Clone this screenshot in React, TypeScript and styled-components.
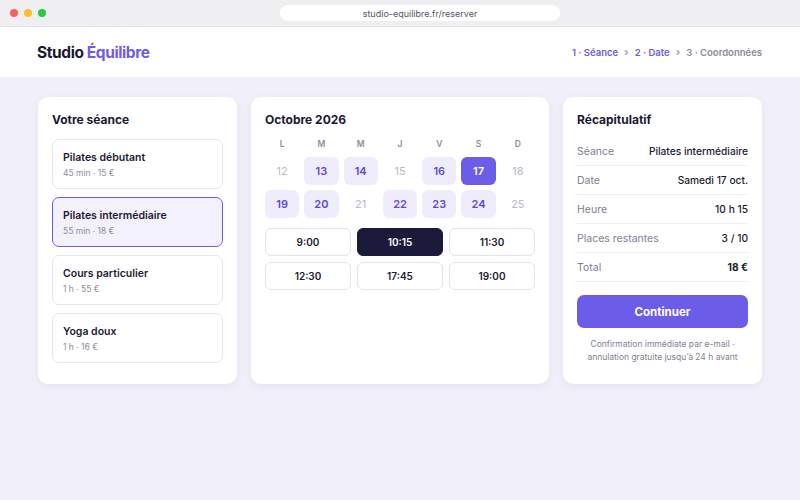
import React from 'react'
import styled, { createGlobalStyle } from 'styled-components'

const GlobalStyle = createGlobalStyle`
  * { box-sizing: border-box; }
  html, body { margin: 0; padding: 0; }
  body {
    font-family: Inter, "Noto Sans", sans-serif;
    background: #f1f0fa;
    color: #1c1a33;
    width: 800px;
    height: 500px;
    overflow: hidden;
  }
`

const sessions = [
  { name: 'Pilates débutant', meta: '45 min · 15 €' },
  { name: 'Pilates intermédiaire', meta: '55 min · 18 €', active: true },
  { name: 'Cours particulier', meta: '1 h · 55 €' },
  { name: 'Yoga doux', meta: '1 h · 16 €' },
]

const weekdays = ['L', 'M', 'M', 'J', 'V', 'S', 'D']

type DayState = 'off' | 'open' | 'selected'
const days: { n: number; state: DayState }[] = [
  { n: 12, state: 'off' },
  { n: 13, state: 'open' },
  { n: 14, state: 'open' },
  { n: 15, state: 'off' },
  { n: 16, state: 'open' },
  { n: 17, state: 'selected' },
  { n: 18, state: 'off' },
  { n: 19, state: 'open' },
  { n: 20, state: 'open' },
  { n: 21, state: 'off' },
  { n: 22, state: 'open' },
  { n: 23, state: 'open' },
  { n: 24, state: 'open' },
  { n: 25, state: 'off' },
]

const times = ['9:00', '10:15', '11:30', '12:30', '17:45', '19:00']

const recap = [
  { label: 'Séance', value: 'Pilates intermédiaire' },
  { label: 'Date', value: 'Samedi 17 oct.' },
  { label: 'Heure', value: '10 h 15' },
  { label: 'Places restantes', value: '3 / 10' },
  { label: 'Total', value: '18 €', strong: true },
]

const App: React.FC = () => {
  return (
    <>
      <GlobalStyle />
      <Chrome>
        <Dots>
          <Dot color='#fe5f57' />
          <Dot color='#febc2e' />
          <Dot color='#28c840' />
        </Dots>
        <UrlBar>studio-equilibre.fr/reserver</UrlBar>
      </Chrome>

      <Header>
        <Logo>
          Studio <span>Équilibre</span>
        </Logo>
        <Steps>
          <Step done>1 · Séance</Step>
          <Chevron>›</Chevron>
          <Step done>2 · Date</Step>
          <Chevron>›</Chevron>
          <Step>3 · Coordonnées</Step>
        </Steps>
      </Header>

      <Main>
        <Card>
          <CardTitle>Votre séance</CardTitle>
          <SessionList>
            {sessions.map((s) => (
              <SessionItem key={s.name} active={s.active}>
                <SessionName>{s.name}</SessionName>
                <SessionMeta>{s.meta}</SessionMeta>
              </SessionItem>
            ))}
          </SessionList>
        </Card>

        <Card>
          <CardTitle>Octobre 2026</CardTitle>
          <CalendarGrid>
            {weekdays.map((d, i) => (
              <Weekday key={i}>{d}</Weekday>
            ))}
            {days.map((d) => (
              <DayCell key={d.n} state={d.state}>
                {d.n}
              </DayCell>
            ))}
          </CalendarGrid>
          <TimeGrid>
            {times.map((t) => (
              <TimeSlot key={t} active={t === '10:15'}>
                {t}
              </TimeSlot>
            ))}
          </TimeGrid>
        </Card>

        <Card>
          <CardTitle>Récapitulatif</CardTitle>
          <RecapList>
            {recap.map((r) => (
              <RecapRow key={r.label}>
                <RecapLabel>{r.label}</RecapLabel>
                <RecapValue strong={r.strong}>{r.value}</RecapValue>
              </RecapRow>
            ))}
          </RecapList>
          <ContinueButton>Continuer</ContinueButton>
          <Note>
            Confirmation immédiate par e-mail ·
            <br />
            annulation gratuite jusqu’à 24 h avant
          </Note>
        </Card>
      </Main>
    </>
  )
}

const Chrome = styled.div`
  height: 27px;
  background: #efeff1;
  border-bottom: 1px solid #e2e2e6;
  display: flex;
  align-items: center;
  padding-left: 280px;
  position: relative;
`

const Dots = styled.div`
  position: absolute;
  left: 10px;
  top: 9px;
  display: flex;
  gap: 6px;
`

const Dot = styled.span<{ color: string }>`
  width: 8px;
  height: 8px;
  border-radius: 50%;
  background: ${(p) => p.color};
`

const UrlBar = styled.div`
  width: 280px;
  height: 16px;
  border-radius: 8px;
  background: #ffffff;
  font-size: 9px;
  color: #55555f;
  display: flex;
  align-items: center;
  justify-content: center;
`

const Header = styled.header`
  height: 50px;
  background: #ffffff;
  display: flex;
  align-items: center;
  justify-content: space-between;
  padding: 0 38px 0 37px;
`

const Logo = styled.div`
  font-size: 15.5px;
  font-weight: 700;
  letter-spacing: -0.4px;
  color: #1a1830;
  span {
    color: #6c5ce7;
  }
`

const Steps = styled.nav`
  display: flex;
  align-items: center;
  gap: 6px;
  font-size: 9.5px;
  font-weight: 600;
`

const Step = styled.span<{ done?: boolean }>`
  color: ${(p) => (p.done ? '#6c5ce7' : '#8b8a9c')};
`

const Chevron = styled.span`
  color: #9a99aa;
  font-size: 11px;
`

const Main = styled.main`
  display: grid;
  grid-template-columns: 199px 298px 199px;
  gap: 14px;
  padding: 20px 38px;
`

const Card = styled.section`
  background: #ffffff;
  border-radius: 10px;
  box-shadow: 0 2px 8px rgba(40, 30, 110, 0.07);
  padding: 15px 14px 20px;
  height: 287px;
  display: flex;
  flex-direction: column;
`

const CardTitle = styled.h2`
  margin: 0 0 12px;
  font-size: 12px;
  font-weight: 700;
  color: #1a1830;
  line-height: 15px;
`

const SessionList = styled.div`
  display: flex;
  flex-direction: column;
  gap: 8px;
`

const SessionItem = styled.div<{ active?: boolean }>`
  height: 50px;
  border-radius: 7px;
  border: ${(p) => (p.active ? '1.5px solid #6c5ce7' : '1px solid #e7e6ef')};
  background: ${(p) => (p.active ? '#f3f1fe' : '#ffffff')};
  padding: 0 10px;
  display: flex;
  flex-direction: column;
  justify-content: center;
  gap: 4px;
`

const SessionName = styled.div`
  font-size: 10.5px;
  font-weight: 600;
  color: #1c1a33;
`

const SessionMeta = styled.div`
  font-size: 8.5px;
  color: #8d8c9c;
`

const CalendarGrid = styled.div`
  display: grid;
  grid-template-columns: repeat(7, 1fr);
  column-gap: 5px;
  row-gap: 5px;
  margin-top: -2px;
`

const Weekday = styled.div`
  font-size: 8.5px;
  font-weight: 600;
  color: #8d8c9c;
  text-align: center;
  height: 14px;
  line-height: 14px;
  margin-bottom: 1px;
`

const dayBg: Record<DayState, string> = {
  off: 'transparent',
  open: '#efedfc',
  selected: '#6c5ce7',
}

const dayColor: Record<DayState, string> = {
  off: '#b9b8c6',
  open: '#5a4bd1',
  selected: '#ffffff',
}

const DayCell = styled.div<{ state: DayState }>`
  height: 28px;
  border-radius: 6px;
  background: ${(p) => dayBg[p.state]};
  color: ${(p) => dayColor[p.state]};
  font-size: 11px;
  font-weight: ${(p) => (p.state === 'off' ? 400 : 600)};
  display: flex;
  align-items: center;
  justify-content: center;
`

const TimeGrid = styled.div`
  display: grid;
  grid-template-columns: repeat(3, 1fr);
  gap: 6px;
  margin-top: 10px;
`

const TimeSlot = styled.div<{ active?: boolean }>`
  height: 28px;
  border-radius: 6px;
  border: 1px solid ${(p) => (p.active ? '#1c1a3a' : '#e4e3ec')};
  background: ${(p) => (p.active ? '#1c1a3a' : '#ffffff')};
  color: ${(p) => (p.active ? '#ffffff' : '#1c1a33')};
  font-size: 10px;
  font-weight: 600;
  display: flex;
  align-items: center;
  justify-content: center;
`

const RecapList = styled.div`
  display: flex;
  flex-direction: column;
  margin-top: -2px;
`

const RecapRow = styled.div`
  height: 29px;
  display: flex;
  align-items: center;
  justify-content: space-between;
  border-bottom: 1px solid #efeef4;
`

const RecapLabel = styled.span`
  font-size: 10.5px;
  color: #7f7e91;
`

const RecapValue = styled.span<{ strong?: boolean }>`
  font-size: 10.2px;
  font-weight: ${(p) => (p.strong ? 700 : 500)};
  color: #1c1a33;
`

const ContinueButton = styled.button`
  margin-top: 13px;
  height: 35px;
  border: none;
  border-radius: 7px;
  background: #6c5ce7;
  color: #ffffff;
  font-family: inherit;
  font-size: 11.5px;
  font-weight: 700;
`

const Note = styled.p`
  margin: 10px 0 0;
  font-size: 8.5px;
  line-height: 13px;
  color: #7f7e91;
  text-align: center;
`

export default App
